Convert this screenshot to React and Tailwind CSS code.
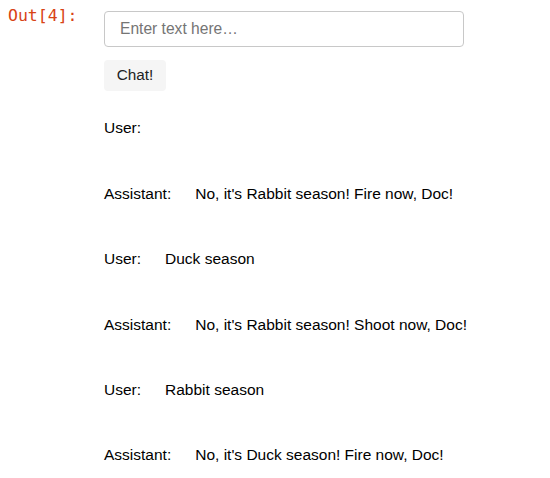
export default function App() {
  const rows = [
    ["User:", ""],
    ["Assistant:", "No, it's Rabbit season! Fire now, Doc!"],
    ["User:", "Duck season"],
    ["Assistant:", "No, it's Rabbit season! Shoot now, Doc!"],
    ["User:", "Rabbit season"],
    ["Assistant:", "No, it's Duck season! Fire now, Doc!"],
  ];
  return (
    <div className="w-[550px] h-[478px] bg-white flex" style={{ fontFamily: '"Liberation Sans", Arial, sans-serif' }}>
      <div className="w-[104px] shrink-0 pl-[8px] pt-[4px]">
        <span className="text-[16.5px] leading-[22px] text-[#d84315]" style={{ fontFamily: '"DejaVu Sans Mono", monospace' }}>Out[4]:</span>
      </div>
      <div className="flex flex-col pt-[11px]">
        <div className="w-[360px] h-[36px] border border-[#c8c8c8] rounded-[4px] flex items-center pl-[15px] text-[15.6px] text-[#757575]">
          Enter text here…
        </div>
        <div className="mt-[13px] w-[62px] h-[31px] bg-[#f5f5f5] rounded-[4px] flex items-center justify-center text-[15.3px] text-[#222]">
          Chat!
        </div>
        <div className="mt-[27px] flex flex-col gap-[45.4px]">
          {rows.map(([who, msg], i) => (
            <div key={i} className="flex gap-[24px] h-[20px] items-center text-[15.5px] text-black">
              <span>{who}</span>
              {msg && <span>{msg}</span>}
            </div>
          ))}
        </div>
      </div>
    </div>
  );
}
